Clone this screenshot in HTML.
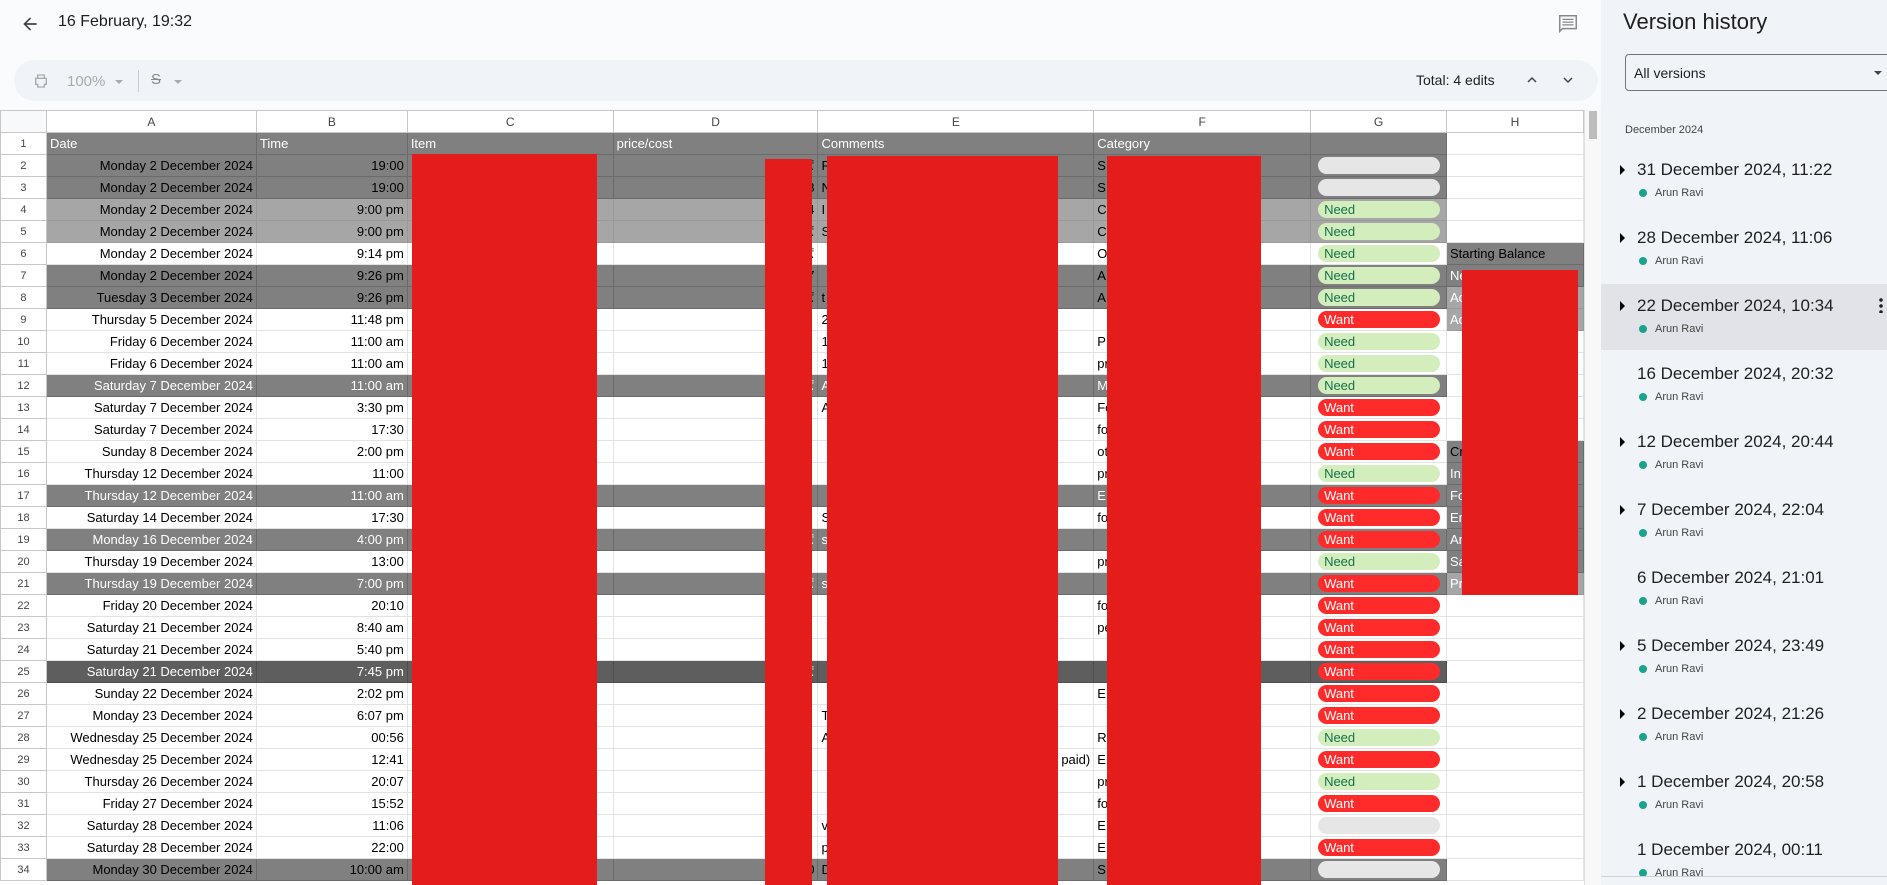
<!DOCTYPE html>
<html><head><meta charset="utf-8"><style>
*{margin:0;padding:0;box-sizing:border-box}
body{width:1887px;height:885px;overflow:hidden;background:#f9fbfd;font-family:"Liberation Sans",Arial,sans-serif;position:relative}
.abs{position:absolute}
#tb{position:absolute;left:14px;top:60px;width:1584px;height:41px;background:#f0f4f9;border-radius:21px}
#grid{position:absolute;left:0;top:110px;width:1584px;height:775px;background:#fff;overflow:hidden}
table{border-collapse:collapse;table-layout:fixed;font-size:13px;color:#000}
td{height:22px;border:1px solid #e2e3e3;white-space:nowrap;overflow:hidden;padding:0 3px;line-height:20px}
tr.h td{background:#fff;color:#444;text-align:center;font-size:12px;border-color:#c7c7c7}
td.rn{background:#fff;color:#444;text-align:center;font-size:11px;padding:0;border-color:#c7c7c7}
td.r{text-align:right}
tr.d td.c{background:#808080;border-color:#6b6b6b}
tr.dw td.c{background:#808080;color:#fff;border-color:#6b6b6b}
tr.l td.c{background:#a6a6a6;border-color:#999}
tr.k td.c{background:#5e5e5e;color:#fff;border-color:#4e4e4e}
tr.t td.c{background:#808080;color:#fff;border-color:#6b6b6b}
td.hg{background:#808080;border-color:#6b6b6b}
td.hgw{background:#808080;color:#fff;border-color:#6b6b6b}
td.hl{background:#a6a6a6;color:#fff;border-color:#999}
.chip{display:block;height:17px;border-radius:9px;line-height:17px;padding-left:6px;font-size:13px;margin:0 3px 0 4px}
.n{background:#d4edbc;color:#11734b}
.w{background:#ff2a2a;color:#fff}
.e{background:#e6e6e6}
.red{position:absolute;background:#e51c1c}
#panel{position:absolute;left:1601px;top:0;width:286px;height:885px;background:#f0f4f9}
.vt{position:absolute;left:36px;font-size:17px;color:#1f1f1f}
.vn{position:absolute;left:54px;font-size:11px;color:#444}
.dot{position:absolute;left:38px;width:8px;height:8px;border-radius:50%;background:#1aa38c}
.tri{position:absolute;left:19px;width:0;height:0;border-top:5px solid transparent;border-bottom:5px solid transparent;border-left:5px solid #000}
</style></head><body>
<div id="tb"></div>
<svg class="abs" style="left:20px;top:14px" width="20" height="20" viewBox="0 0 24 24"><path d="M20 11H7.8l5.6-5.6L12 4l-8 8 8 8 1.4-1.4L7.8 13H20z" fill="#444"/></svg>
<div class="abs" style="left:58px;top:13px;font-size:16px;color:#1f1f1f">16 February, 19:32</div>
<svg class="abs" style="left:1557px;top:13px" width="22" height="22" viewBox="0 0 24 24"><path d="M3 3h18v14H6l-3 3z" fill="none" stroke="#888" stroke-width="1.6"/><path d="M6 7h12M6 10h12M6 13h12" stroke="#888" stroke-width="1.4"/></svg>
<svg class="abs" style="left:33px;top:73px" width="16" height="16" viewBox="0 0 24 24"><path d="M7 3h10v5H7zM4 8h16v9h-3v4H7v-4H4z" fill="none" stroke="#aaa" stroke-width="2"/></svg>
<div class="abs" style="left:67px;top:73px;font-size:15px;color:#aaa">100%</div>
<div class="abs" style="left:115px;top:80px;border-left:4px solid transparent;border-right:4px solid transparent;border-top:4px solid #aaa"></div>
<div class="abs" style="left:138px;top:70px;width:1px;height:22px;background:#ccc"></div>
<div class="abs" style="left:151px;top:71px;font-size:15px;color:#888;text-decoration:line-through">S</div>
<div class="abs" style="left:174px;top:80px;border-left:4px solid transparent;border-right:4px solid transparent;border-top:4px solid #aaa"></div>
<div class="abs" style="left:1416px;top:72px;font-size:14px;color:#1f1f1f">Total: 4 edits</div>
<svg class="abs" style="left:1526px;top:74px" width="12" height="12" viewBox="0 0 12 12"><path d="M2 8l4-4 4 4" fill="none" stroke="#444" stroke-width="1.5"/></svg>
<svg class="abs" style="left:1562px;top:74px" width="12" height="12" viewBox="0 0 12 12"><path d="M2 4l4 4 4-4" fill="none" stroke="#444" stroke-width="1.5"/></svg>
<div id="grid">
<table>
<colgroup><col style="width:46px"><col style="width:210px"><col style="width:151px"><col style="width:206px"><col style="width:205px"><col style="width:276px"><col style="width:217px"><col style="width:136px"><col style="width:137px"></colgroup>
<tr class="h"><td class="rn" style="background:#f8f9fa"></td><td>A</td><td>B</td><td>C</td><td>D</td><td>E</td><td>F</td><td>G</td><td>H</td></tr>
<tr class="t"><td class="rn">1</td><td class="c">Date</td><td class="c">Time</td><td class="c">Item</td><td class="c">price/cost</td><td class="c">Comments</td><td class="c">Category</td><td class="c"></td><td></td></tr>
<tr class="d"><td class="rn">2</td><td class="c r">Monday 2 December 2024</td><td class="c r">19:00</td><td class="c"></td><td class="c r">-₹</td><td class="c">F</td><td class="c">S</td><td class="c"><span class="chip e"></span></td><td></td></tr>
<tr class="d"><td class="rn">3</td><td class="c r">Monday 2 December 2024</td><td class="c r">19:00</td><td class="c"></td><td class="c r">-₹108</td><td class="c">N</td><td class="c">S</td><td class="c"><span class="chip e"></span></td><td></td></tr>
<tr class="l"><td class="rn">4</td><td class="c r">Monday 2 December 2024</td><td class="c r">9:00 pm</td><td class="c"></td><td class="c r">₹14</td><td class="c">I</td><td class="c">C</td><td class="c"><span class="chip n">Need</span></td><td></td></tr>
<tr class="l"><td class="rn">5</td><td class="c r">Monday 2 December 2024</td><td class="c r">9:00 pm</td><td class="c"></td><td class="c r">₹</td><td class="c">S</td><td class="c">C</td><td class="c"><span class="chip n">Need</span></td><td></td></tr>
<tr><td class="rn">6</td><td class="r">Monday 2 December 2024</td><td class="r">9:14 pm</td><td></td><td class="r">₹</td><td></td><td>O</td><td><span class="chip n">Need</span></td><td class="hg">Starting Balance</td></tr>
<tr class="d"><td class="rn">7</td><td class="c r">Monday 2 December 2024</td><td class="c r">9:26 pm</td><td class="c"></td><td class="c r">₹7</td><td class="c"></td><td class="c">A</td><td class="c"><span class="chip n">Need</span></td><td class="hgw">Ne</td></tr>
<tr class="d"><td class="rn">8</td><td class="c r">Tuesday 3 December 2024</td><td class="c r">9:26 pm</td><td class="c"></td><td class="c r">₹</td><td class="c">t</td><td class="c">A</td><td class="c"><span class="chip n">Need</span></td><td class="hl">Ac</td></tr>
<tr><td class="rn">9</td><td class="r">Thursday 5 December 2024</td><td class="r">11:48 pm</td><td></td><td></td><td>2</td><td></td><td><span class="chip w">Want</span></td><td class="hl">Ac</td></tr>
<tr><td class="rn">10</td><td class="r">Friday 6 December 2024</td><td class="r">11:00 am</td><td></td><td></td><td>1</td><td>P</td><td><span class="chip n">Need</span></td><td></td></tr>
<tr><td class="rn">11</td><td class="r">Friday 6 December 2024</td><td class="r">11:00 am</td><td></td><td></td><td>1</td><td>pr</td><td><span class="chip n">Need</span></td><td></td></tr>
<tr class="dw"><td class="rn">12</td><td class="c r">Saturday 7 December 2024</td><td class="c r">11:00 am</td><td class="c"></td><td class="c r">₹</td><td class="c">A</td><td class="c">M</td><td class="c"><span class="chip n">Need</span></td><td></td></tr>
<tr><td class="rn">13</td><td class="r">Saturday 7 December 2024</td><td class="r">3:30 pm</td><td></td><td></td><td>A</td><td>Fo</td><td><span class="chip w">Want</span></td><td></td></tr>
<tr><td class="rn">14</td><td class="r">Saturday 7 December 2024</td><td class="r">17:30</td><td></td><td></td><td></td><td>fo</td><td><span class="chip w">Want</span></td><td></td></tr>
<tr><td class="rn">15</td><td class="r">Sunday 8 December 2024</td><td class="r">2:00 pm</td><td></td><td></td><td></td><td>ot</td><td><span class="chip w">Want</span></td><td class="hg">Cr</td></tr>
<tr><td class="rn">16</td><td class="r">Thursday 12 December 2024</td><td class="r">11:00</td><td></td><td></td><td></td><td>pr</td><td><span class="chip n">Need</span></td><td class="hgw">In</td></tr>
<tr class="dw"><td class="rn">17</td><td class="c r">Thursday 12 December 2024</td><td class="c r">11:00 am</td><td class="c"></td><td class="c"></td><td class="c"></td><td class="c">E</td><td class="c"><span class="chip w">Want</span></td><td class="hgw">Fo</td></tr>
<tr><td class="rn">18</td><td class="r">Saturday 14 December 2024</td><td class="r">17:30</td><td></td><td></td><td>S</td><td>fo</td><td><span class="chip w">Want</span></td><td class="hgw">En</td></tr>
<tr class="dw"><td class="rn">19</td><td class="c r">Monday 16 December 2024</td><td class="c r">4:00 pm</td><td class="c"></td><td class="c r">₹</td><td class="c">s</td><td class="c"></td><td class="c"><span class="chip w">Want</span></td><td class="hgw">An</td></tr>
<tr><td class="rn">20</td><td class="r">Thursday 19 December 2024</td><td class="r">13:00</td><td></td><td></td><td></td><td>pr</td><td><span class="chip n">Need</span></td><td class="hgw">Sa</td></tr>
<tr class="dw"><td class="rn">21</td><td class="c r">Thursday 19 December 2024</td><td class="c r">7:00 pm</td><td class="c"></td><td class="c r">₹</td><td class="c">s</td><td class="c"></td><td class="c"><span class="chip w">Want</span></td><td class="hl">Pr</td></tr>
<tr><td class="rn">22</td><td class="r">Friday 20 December 2024</td><td class="r">20:10</td><td></td><td></td><td></td><td>fo</td><td><span class="chip w">Want</span></td><td></td></tr>
<tr><td class="rn">23</td><td class="r">Saturday 21 December 2024</td><td class="r">8:40 am</td><td></td><td></td><td></td><td>pe</td><td><span class="chip w">Want</span></td><td></td></tr>
<tr><td class="rn">24</td><td class="r">Saturday 21 December 2024</td><td class="r">5:40 pm</td><td></td><td></td><td></td><td></td><td><span class="chip w">Want</span></td><td></td></tr>
<tr class="k"><td class="rn">25</td><td class="c r">Saturday 21 December 2024</td><td class="c r">7:45 pm</td><td class="c"></td><td class="c r">₹</td><td class="c"></td><td class="c"></td><td class="c"><span class="chip w">Want</span></td><td></td></tr>
<tr><td class="rn">26</td><td class="r">Sunday 22 December 2024</td><td class="r">2:02 pm</td><td></td><td></td><td></td><td>E</td><td><span class="chip w">Want</span></td><td></td></tr>
<tr><td class="rn">27</td><td class="r">Monday 23 December 2024</td><td class="r">6:07 pm</td><td></td><td></td><td>T</td><td></td><td><span class="chip w">Want</span></td><td></td></tr>
<tr><td class="rn">28</td><td class="r">Wednesday 25 December 2024</td><td class="r">00:56</td><td></td><td></td><td>A</td><td>R</td><td><span class="chip n">Need</span></td><td></td></tr>
<tr><td class="rn">29</td><td class="r">Wednesday 25 December 2024</td><td class="r">12:41</td><td></td><td></td><td class="r">paid)</td><td>E</td><td><span class="chip w">Want</span></td><td></td></tr>
<tr><td class="rn">30</td><td class="r">Thursday 26 December 2024</td><td class="r">20:07</td><td></td><td></td><td></td><td>pr</td><td><span class="chip n">Need</span></td><td></td></tr>
<tr><td class="rn">31</td><td class="r">Friday 27 December 2024</td><td class="r">15:52</td><td></td><td></td><td></td><td>fo</td><td><span class="chip w">Want</span></td><td></td></tr>
<tr><td class="rn">32</td><td class="r">Saturday 28 December 2024</td><td class="r">11:06</td><td></td><td></td><td>v</td><td>E</td><td><span class="chip e"></span></td><td></td></tr>
<tr><td class="rn">33</td><td class="r">Saturday 28 December 2024</td><td class="r">22:00</td><td></td><td></td><td>p</td><td>E</td><td><span class="chip w">Want</span></td><td></td></tr>
<tr class="d"><td class="rn">34</td><td class="c r">Monday 30 December 2024</td><td class="c r">10:00 am</td><td class="c"></td><td class="c r">-₹10</td><td class="c">D</td><td class="c">S</td><td class="c"><span class="chip e"></span></td><td></td></tr>
</table>
</div>
<div class="abs" style="left:1584px;top:110px;width:17px;height:775px;background:#f8f8f8;border-left:1px solid #e0e0e0"></div>
<div class="abs" style="left:1589px;top:111px;width:8px;height:28px;background:#bdbdbd"></div>
<div class="red" style="left:412px;top:154px;width:185px;height:731px"></div>
<div class="red" style="left:765px;top:159px;width:47px;height:726px"></div>
<div class="red" style="left:827px;top:156px;width:231px;height:729px"></div>
<div class="red" style="left:1107px;top:156px;width:154px;height:729px"></div>
<div class="red" style="left:1462px;top:270px;width:116px;height:325px"></div>
<div id="panel">
<div class="abs" style="left:22px;top:9px;font-size:22px;color:#1f1f1f">Version history</div>
<div class="abs" style="left:24px;top:54px;width:270px;height:37px;border:1px solid #747775;border-radius:4px;font-size:14px;color:#1f1f1f;padding:10px 8px">All versions</div>
<div class="abs" style="left:273px;top:71px;border-left:4px solid transparent;border-right:4px solid transparent;border-top:4px solid #444"></div>
<div class="abs" style="left:24px;top:124px;font-size:11px;color:#444">December 2024</div>
<div class="abs" style="left:0;top:284px;width:286px;height:66px;background:#e1e3e8"></div>
<div class="abs" style="left:278px;top:297px;width:4px;height:16px;background:radial-gradient(circle,#222 1.6px,transparent 2px) 0 0/4px 6px"></div>

<div class="tri" style="top:165px"></div><div class="vt" style="top:160px">31 December 2024, 11:22</div><div class="dot" style="top:189px"></div><div class="vn" style="top:187px">Arun Ravi</div>
<div class="tri" style="top:233px"></div><div class="vt" style="top:228px">28 December 2024, 11:06</div><div class="dot" style="top:257px"></div><div class="vn" style="top:255px">Arun Ravi</div>
<div class="tri" style="top:301px"></div><div class="vt" style="top:296px">22 December 2024, 10:34</div><div class="dot" style="top:325px"></div><div class="vn" style="top:323px">Arun Ravi</div>
<div class="vt" style="top:364px">16 December 2024, 20:32</div><div class="dot" style="top:393px"></div><div class="vn" style="top:391px">Arun Ravi</div>
<div class="tri" style="top:437px"></div><div class="vt" style="top:432px">12 December 2024, 20:44</div><div class="dot" style="top:461px"></div><div class="vn" style="top:459px">Arun Ravi</div>
<div class="tri" style="top:505px"></div><div class="vt" style="top:500px">7 December 2024, 22:04</div><div class="dot" style="top:529px"></div><div class="vn" style="top:527px">Arun Ravi</div>
<div class="vt" style="top:568px">6 December 2024, 21:01</div><div class="dot" style="top:597px"></div><div class="vn" style="top:595px">Arun Ravi</div>
<div class="tri" style="top:641px"></div><div class="vt" style="top:636px">5 December 2024, 23:49</div><div class="dot" style="top:665px"></div><div class="vn" style="top:663px">Arun Ravi</div>
<div class="tri" style="top:709px"></div><div class="vt" style="top:704px">2 December 2024, 21:26</div><div class="dot" style="top:733px"></div><div class="vn" style="top:731px">Arun Ravi</div>
<div class="tri" style="top:777px"></div><div class="vt" style="top:772px">1 December 2024, 20:58</div><div class="dot" style="top:801px"></div><div class="vn" style="top:799px">Arun Ravi</div>
<div class="vt" style="top:840px">1 December 2024, 00:11</div><div class="dot" style="top:869px"></div><div class="vn" style="top:867px">Arun Ravi</div>
<div class="abs" style="left:0;top:876px;width:286px;height:9px;background:#f0f4f9;border-top:1px solid #d0d0d0"></div>
</div>
</body></html>
